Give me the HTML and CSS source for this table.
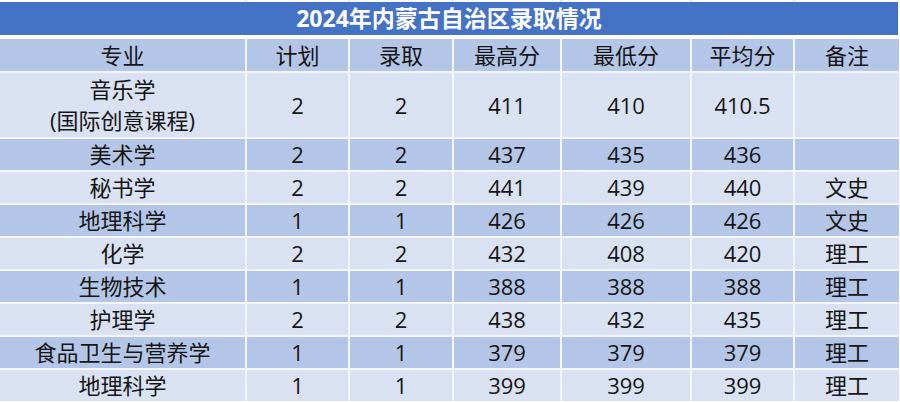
FILE: index.html
```html
<!DOCTYPE html>
<html lang="zh">
<head>
<meta charset="utf-8">
<link rel="stylesheet" href="styles.css">
</head>
<body>
<div class="sheet">
  <div class="strip">
    <span></span><span></span><span></span><span></span><span></span><span></span><span></span>
  </div>
  <div class="title">2024年内蒙古自治区录取情况</div>
  <div class="grid">
    <div class="c dark">专业</div><div class="c dark">计划</div><div class="c dark">录取</div><div class="c dark">最高分</div><div class="c dark">最低分</div><div class="c dark">平均分</div><div class="c dark">备注</div>

    <div class="c light">音乐学<br>(国际创意课程)</div><div class="c light">2</div><div class="c light">2</div><div class="c light">411</div><div class="c light">410</div><div class="c light">410.5</div><div class="c light"></div>

    <div class="c dark">美术学</div><div class="c dark">2</div><div class="c dark">2</div><div class="c dark">437</div><div class="c dark">435</div><div class="c dark">436</div><div class="c dark"></div>

    <div class="c light">秘书学</div><div class="c light">2</div><div class="c light">2</div><div class="c light">441</div><div class="c light">439</div><div class="c light">440</div><div class="c light">文史</div>

    <div class="c dark">地理科学</div><div class="c dark">1</div><div class="c dark">1</div><div class="c dark">426</div><div class="c dark">426</div><div class="c dark">426</div><div class="c dark">文史</div>

    <div class="c light">化学</div><div class="c light">2</div><div class="c light">2</div><div class="c light">432</div><div class="c light">408</div><div class="c light">420</div><div class="c light">理工</div>

    <div class="c dark">生物技术</div><div class="c dark">1</div><div class="c dark">1</div><div class="c dark">388</div><div class="c dark">388</div><div class="c dark">388</div><div class="c dark">理工</div>

    <div class="c light">护理学</div><div class="c light">2</div><div class="c light">2</div><div class="c light">438</div><div class="c light">432</div><div class="c light">435</div><div class="c light">理工</div>

    <div class="c dark">食品卫生与营养学</div><div class="c dark">1</div><div class="c dark">1</div><div class="c dark">379</div><div class="c dark">379</div><div class="c dark">379</div><div class="c dark">理工</div>

    <div class="c light">地理科学</div><div class="c light">1</div><div class="c light">1</div><div class="c light">399</div><div class="c light">399</div><div class="c light">399</div><div class="c light">理工</div>
  </div>
</div>
</body>
</html>
```

FILE: styles.css
```css
html, body {
  margin: 0;
  padding: 0;
  background: #ffffff;
}

body {
  font-family: "Open Sans", "Noto Sans CJK SC", sans-serif;
  color: #151515;
  overflow: hidden;
}

.sheet {
  width: 900px;
  height: 402px;
  overflow: hidden;
}

.strip {
  display: grid;
  grid-template-columns: 245px 101px 102px 106px 128px 101px 104px;
  column-gap: 2px;
  height: 2px;
  background: #e3e7f2;
  width: 899px;
}

.strip span {
  background: #ffffff;
}

.title {
  width: 898px;
  height: 33px;
  background: #4472c4;
  color: #ffffff;
  font-weight: bold;
  font-size: 23px;
  line-height: 33px;
  text-align: center;
  margin-bottom: 4px;
}

.grid {
  display: grid;
  width: 899px;
  grid-template-columns: 245px 101px 102px 106px 128px 101px 104px;
  grid-template-rows: 32px 64px repeat(8, 31px);
  column-gap: 2px;
  row-gap: 2px;
  background: #f4f6fb;
}

.c {
  display: flex;
  align-items: center;
  justify-content: center;
  text-align: center;
  font-size: 22px;
  line-height: 31px;
  white-space: nowrap;
}

.dark {
  background: #b4c6e7;
}

.light {
  background: #d9e1f2;
}
```
